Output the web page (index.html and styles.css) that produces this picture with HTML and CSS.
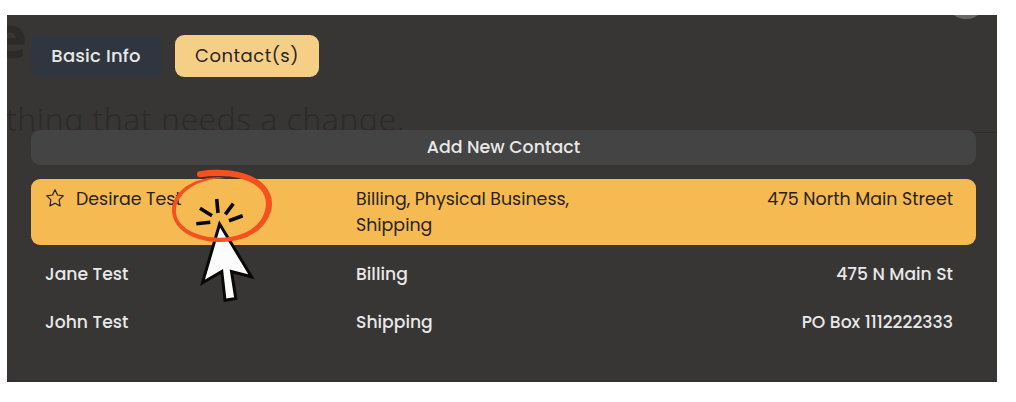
FILE: index.html
```html
<!DOCTYPE html>
<html lang="en">
<head>
    <meta charset="UTF-8">
    <meta name="viewport" content="width=device-width, initial-scale=1.0">
    <title>Contacts</title>
    <link rel="stylesheet" href="styles.css">
</head>
<body>
    <div class="panel">
        <!-- Dimmed page behind the modal -->
        <div class="backdrop">
            <div class="backdrop-title">e</div>
            <div class="backdrop-text">thing that needs a change.</div>
            <div class="backdrop-line"></div>
            <div class="backdrop-avatar"></div>
        </div>

        <div class="tabs">
            <button class="tab tab-info">Basic Info</button>
            <button class="tab tab-contacts">Contact(s)</button>
        </div>

        <button class="add-btn">Add New Contact</button>

        <div class="contacts">
            <div class="contact active">
                <div class="name">
                    <svg class="star" viewBox="0 0 20 20">
                        <path d="M10 1.7 L12.5 7 L18.3 7.8 L14.1 11.9 L15.1 17.9 L10 15.2 L4.9 17.9 L5.9 11.9 L1.7 7.8 L7.5 7 Z"/>
                    </svg>
                    <span>Desirae Test</span>
                </div>
                <div class="types">Billing, Physical Business,<br>Shipping</div>
                <div class="address">475 North Main Street</div>
            </div>
            <div class="contact">
                <div class="name">Jane Test</div>
                <div class="types">Billing</div>
                <div class="address">475 N Main St</div>
            </div>
            <div class="contact">
                <div class="name">John Test</div>
                <div class="types">Shipping</div>
                <div class="address">PO Box 1112222333</div>
            </div>
        </div>
    </div>

    <!-- Click marker -->
    <svg class="marker" viewBox="160 160 130 150">
        <path class="cursor" d="M219.6 224 L251.5 276.8 L231.5 271.5 L235.8 298.5 L225 300.3 L221.8 271.5 L202.5 282.7 Z"/>
        <path class="rays" d="M216.7 199 L218 213 M233.3 203.7 L225.3 214.3 M242.7 215.7 L229 220.7 M200 208.3 L212 215.7 M196.3 223.7 L210.3 222.3"/>
        <path class="ring" d="M199.5 171.2 C227 167 254 173 265 186 C274 196 274 209 267 220 C258 235 239 243 217 242 C195 241 175 231 172.3 214 C169.5 194 190 177.5 219 177.2 L227 178.4 C200 177.5 174.5 192 176 213 C178 229 199 237.5 219 237.7 C239 237.7 255 230 262 218 C268 207 267 196 260 189 C248 177 225 174 200 177.3 C196 177.4 196 171.5 199.5 171.2 Z"/>
    </svg>
</body>
</html>
```

FILE: styles.css
```css
* { box-sizing: border-box; }
body { margin: 0; padding: 15px 19px 20px 7px; background: #fff; font-family: Poppins, Inter, sans-serif; font-size: 17.4px; color: #e8e8e8; }
button { border: none; font-family: inherit; font-size: inherit; color: inherit; }
.panel { position: relative; height: 367px; padding: 20px 21px 0 24px; background: #383535; overflow: hidden; border-bottom: 2px solid #333031; }

/* Backdrop */
.backdrop { position: absolute; inset: 0; color: #2d2b29; font-family: "Noto Sans", sans-serif; }
.backdrop-title { position: absolute; left: -15px; top: -15px; font-size: 58px; line-height: 72px; font-weight: 800; }
.backdrop-text { position: absolute; left: -1px; top: 82px; font-size: 32px; line-height: 44px; font-weight: 300; letter-spacing: 0.42px; white-space: nowrap; }
.backdrop-line { position: absolute; right: 0; top: 117px; width: 24px; height: 1px; background: #2f2d2d; }
.backdrop-avatar { position: absolute; right: 10px; top: -38px; width: 42px; height: 42px; border-radius: 50%; background: #656864; }

.tabs { position: relative; display: flex; gap: 14px; }
.tab { height: 42px; padding: 0 0 2px; border-radius: 9px; font-size: 18px; }
.tab-info { width: 130px; background: #303640; font-weight: 500; letter-spacing: 0.2px; }
.tab-contacts { width: 144px; background: #f6cf87; color: #292522; letter-spacing: 0.5px; }
.add-btn { position: relative; display: block; width: 100%; height: 35px; margin-top: 53px; padding: 0 0 1px; border-radius: 9px; background: #444; font-weight: 500; }

.contacts { position: relative; margin-top: 14px; }
.contact { display: grid; grid-template-columns: 311px 1fr auto; height: 48px; padding: 7px 23px 0 14px; line-height: 26px; font-size: 17.2px; font-weight: 500; }
.contact.active { height: 66px; margin-bottom: 9px; border-radius: 9px; background: #f5bb52; color: #2a2218; font-size: 17.4px; font-weight: 400; }
.name { display: flex; align-items: flex-start; }
.star { width: 20px; height: 20px; margin: 2px 11px 0 0; fill: none; stroke: #2a2218; stroke-width: 1.2; stroke-linejoin: round; }

/* Click marker */
.marker { position: absolute; left: 160px; top: 160px; width: 130px; height: 150px; }
.cursor { fill: #fcfcfc; stroke: #090806; stroke-width: 3; }
.rays { fill: none; stroke: #090806; stroke-width: 3.6; }
.ring { fill: #f4511e; }
```
